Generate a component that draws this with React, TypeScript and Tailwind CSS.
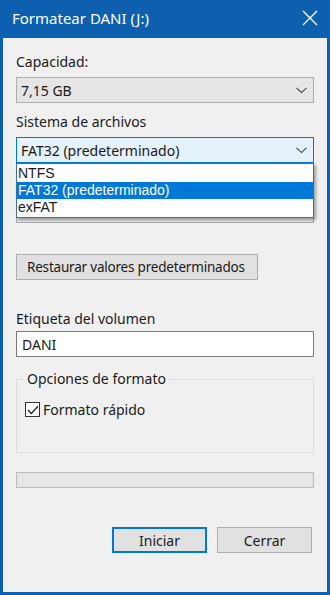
import React from 'react';

function Chevron() {
  return (
    <svg width="11" height="7" viewBox="0 0 11 7" fill="none">
      <path d="M0.5 0.8L5.5 5.6L10.5 0.8" stroke="#404040" strokeWidth="1.1" />
    </svg>
  );
}

function Combo({ value, active }: { value: string; active?: boolean }) {
  return (
    <div
      className={`h-[26px] flex items-center justify-between pl-[4px] pr-[6px] border ${
        active ? 'bg-[#e5f1fb] border-[#0078d7]' : 'bg-[#e5e5e5] border-[#adadad]'
      }`}
    >
      <span>{value}</span>
      <Chevron />
    </div>
  );
}

function Label({ children }: { children?: React.ReactNode }) {
  return <div className="h-[18px] leading-[18px]">{children}</div>;
}

export default function App() {
  return (
    <div
      className="w-[330px] h-[595px] bg-[#0d5fb0] flex flex-col text-[14px] text-[#1a1a1a]"
      style={{ fontFamily: '"Noto Sans", "Open Sans", sans-serif' }}
    >
      {/* barra de título */}
      <div className="h-[38px] shrink-0 flex items-center justify-between pl-[12px] pr-[12px] text-white">
        <span className="text-[15px] leading-none pb-[2px]">Formatear DANI (J:)</span>
        <svg width="16" height="16" viewBox="0 0 16 16" className="mb-[2px]">
          <path d="M1 1L15 15M15 1L1 15" stroke="white" strokeWidth="1.4" />
        </svg>
      </div>

      {/* contenido */}
      <div className="relative flex-1 mx-[3px] mb-[3px] bg-[#f0f0f0] px-[13px] pt-[15px] flex flex-col">
        <Label>Capacidad:</Label>
        <div className="mt-[6px]">
          <Combo value="7,15 GB" />
        </div>

        <div className="mt-[10px]">
          <Label>Sistema de archivos</Label>
        </div>
        <div className="mt-[6px] relative">
          <Combo value="FAT32 (predeterminado)" active />

          {/* lista desplegable */}
          <div
            className="absolute left-0 right-0 top-[26px] z-10 bg-white border border-[#3c6ea8] shadow-[2px_2px_3px_rgba(0,0,0,0.35)] py-[1px] text-[14px]"
            style={{ fontFamily: '"Liberation Sans", Arial, sans-serif' }}
          >
            <div className="h-[17px] leading-[17px] px-[1px]">NTFS</div>
            <div className="h-[17px] leading-[17px] px-[1px] bg-[#0078d7] text-white">
              FAT32 (predeterminado)
            </div>
            <div className="h-[17px] leading-[17px] px-[1px]">exFAT</div>
          </div>
        </div>

        {/* tamaño de unidad (tapado por la lista) */}
        <div className="mt-[10px]">
          <Label />
        </div>
        <div className="mt-[6px] h-[26px] bg-[#e5e5e5] border border-[#adadad]" />

        <button className="mt-[31px] self-start h-[26px] w-[242px] bg-[#e1e1e1] border border-[#adadad] text-left pl-[10px] whitespace-nowrap text-[13.5px] tracking-[-0.2px]">
          Restaurar valores predeterminados
        </button>

        <div className="mt-[30px]">
          <Label>Etiqueta del volumen</Label>
        </div>
        <div className="mt-[3px] h-[26px] bg-white border border-[#7a7a7a] flex items-center pl-[5px]">
          DANI
        </div>

        {/* opciones de formato */}
        <div className="mt-[22px] h-[74px] border border-[#dcdcdc] relative pt-[19px] pl-[8px]">
          <div className="absolute -top-[10px] left-[7px] bg-[#f0f0f0] px-[3px] h-[18px] leading-[18px]">
            Opciones de formato
          </div>
          <div className="flex items-center gap-[3px]">
            <div className="w-[15px] h-[15px] border border-[#333] bg-white flex items-center justify-center">
              <svg width="12" height="10" viewBox="0 0 12 10" fill="none">
                <path d="M1 5L4.3 8.5L11 1.2" stroke="#222" strokeWidth="1.3" />
              </svg>
            </div>
            <span>Formato rápido</span>
          </div>
        </div>

        {/* progreso */}
        <div className="mt-[19px] h-[16px] bg-[#e6e6e6] border border-[#bcbcbc]" />

        <div className="mt-[39px] flex justify-end gap-[10px] pr-[2px]">
          <button className="w-[95px] h-[26px] bg-[#e1e1e1] border-2 border-[#0078d7]">Iniciar</button>
          <button className="w-[95px] h-[26px] bg-[#e1e1e1] border border-[#adadad]">Cerrar</button>
        </div>
      </div>
    </div>
  );
}
